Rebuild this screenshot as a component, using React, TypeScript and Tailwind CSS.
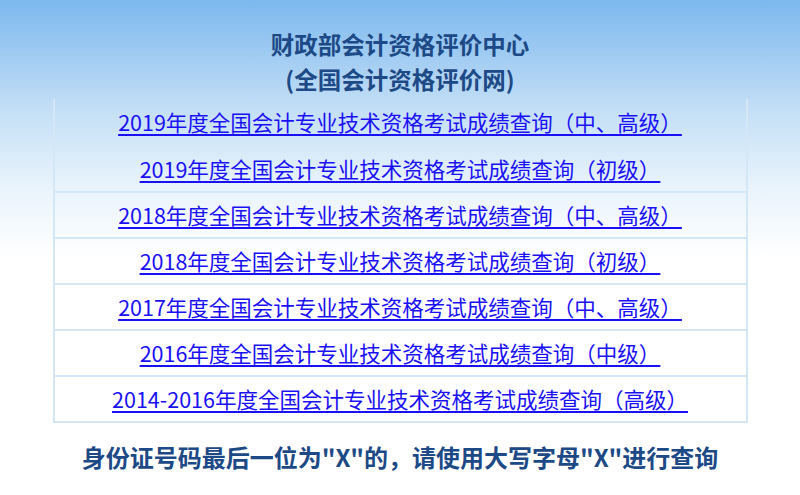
import React from 'react';

const links = [
    '2019年度全国会计专业技术资格考试成绩查询（中、高级）',
    '2019年度全国会计专业技术资格考试成绩查询（初级）',
    '2018年度全国会计专业技术资格考试成绩查询（中、高级）',
    '2018年度全国会计专业技术资格考试成绩查询（初级）',
    '2017年度全国会计专业技术资格考试成绩查询（中、高级）',
    '2016年度全国会计专业技术资格考试成绩查询（中级）',
    '2014-2016年度全国会计专业技术资格考试成绩查询（高级）',
];

export default function App() {
    return (
        <div
            className="w-[800px] h-[495px] overflow-hidden bg-[linear-gradient(to_bottom,#7cb8ee_0px,#c4dff6_110px,#eaf4fc_190px,#ffffff_260px)] flex flex-col items-center"
            style={{ fontFamily: '"Noto Sans CJK SC", "Noto Sans", sans-serif' }}
        >
            <div className="pt-[27px] text-center text-[23.5px] font-bold leading-[35px] text-[#1d4a86]">
                <div>财政部会计资格评价中心</div>
                <div>(全国会计资格评价网)</div>
            </div>
            <div className="mt-[2px] w-[695px] border-x-2 border-b-2 border-[#d3e7f7]">
                {links.map((text, i) => (
                    <div
                        key={i}
                        className={`h-[46px] flex items-center justify-center ${i > 0 ? 'border-t-2 border-[#d3e7f7]' : ''}`}
                    >
                        <a href="#" className="text-[21.5px] leading-none text-[#1a10f5] underline decoration-2 underline-offset-[3px]">
                            {text}
                        </a>
                    </div>
                ))}
            </div>
            <div className="mt-[22px] text-[24px] font-bold text-[#1d4a86] leading-none">
                身份证号码最后一位为"X"的，请使用大写字母"X"进行查询
            </div>
        </div>
    );
}
